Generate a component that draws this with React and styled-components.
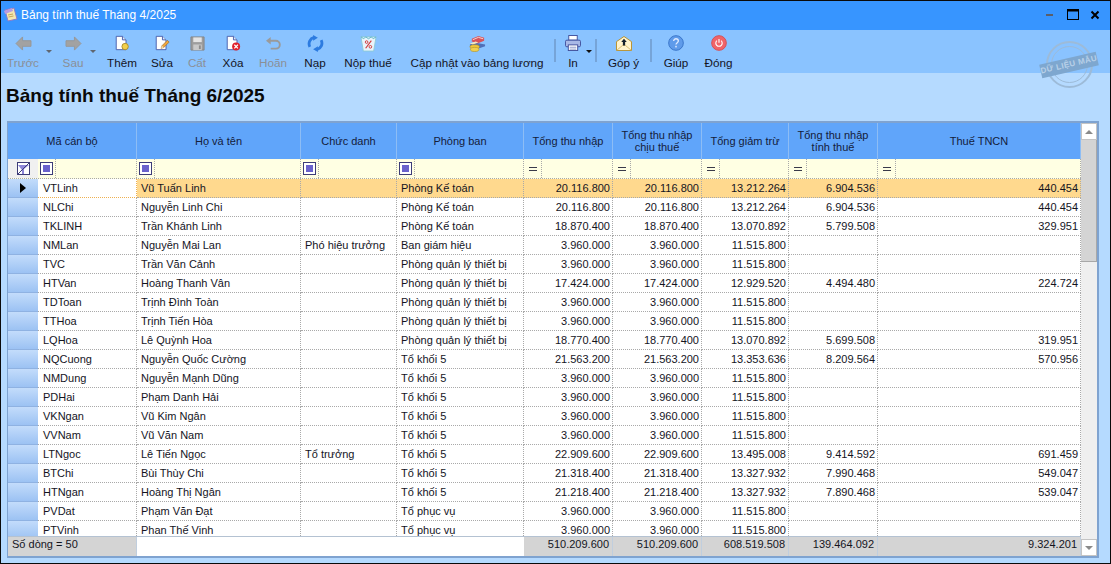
import styled, { createGlobalStyle } from 'styled-components'

const GlobalStyle = createGlobalStyle`
    html, body {
        margin: 0;
        padding: 0;
        background: #b5daff;
    }
    body {
        font-family: "Liberation Sans", Arial, sans-serif;
        font-size: 11px;
        color: #14141e;
    }
`

const GRID_COLUMNS = '30px 99px 164px 96px 127px 89px 89px 87px 89px 203px'

const Window = styled.div`
    position: relative;
    display: flex;
    flex-direction: column;
    box-sizing: border-box;
    width: 1111px;
    height: 564px;
    overflow: hidden;
    background: #b5daff;
    border: 1px solid #0a0a0a;
`

const TitleBar = styled.div`
    display: flex;
    align-items: center;
    box-sizing: border-box;
    height: 29px;
    padding: 0 0 2px 2px;
    background: #3795ff;
    color: #fff;
    font-size: 12px;
`

const TitleText = styled.span`
    margin-left: 2px;
`

const WindowButtons = styled.div`
    display: flex;
    align-items: center;
    margin-left: auto;
    padding-right: 4px;
`

const WindowButton = styled.span`
    display: flex;
    justify-content: center;
    width: 22px;
`

const Toolbar = styled.div`
    display: flex;
    align-items: flex-start;
    height: 43px;
    padding-left: 3px;
    background: #8ac3ff;
`

const ToolButton = styled.div`
    display: flex;
    flex-direction: column;
    align-items: center;
    flex: none;
    width: ${(p) => p.$w}px;
    color: ${(p) => (p.$off ? '#8b8f96' : '#14141e')};
    white-space: nowrap;
`

const ToolIcon = styled.div`
    display: flex;
    align-items: center;
    justify-content: center;
    height: 20px;
    margin-top: 3px;
`

const ToolLabel = styled.span`
    margin-top: 2px;
    font-size: 11.7px;
    line-height: 15px;
`

const Caret = styled.div`
    display: flex;
    flex: none;
    justify-content: center;
    width: ${(p) => p.$w}px;
    padding-top: 20px;
    &::after {
        content: '';
        flex: none;
        border: 3px solid transparent;
        border-top: 3px solid ${(p) => (p.$off ? '#5f6670' : '#111')};
        border-bottom: 0;
    }
`

const Separator = styled.div`
    flex: none;
    width: 2px;
    height: 23px;
    margin: 9px ${(p) => p.$right}px 0 ${(p) => p.$left}px;
    background: #76a4d8;
`

const Heading = styled.h1`
    margin: 0;
    padding: 11px 0 13px 5px;
    font-size: 19px;
    line-height: 24px;
    font-weight: bold;
    color: #0a0a0a;
`

const GridFrame = styled.div`
    display: flex;
    box-sizing: border-box;
    width: 1092px;
    height: 437px;
    margin-left: 6px;
    border: 2px solid #7fa3d0;
    border-left-width: 1px;
    background: #fff;
`

const GridMain = styled.div`
    display: flex;
    flex-direction: column;
    width: 1073px;
    background: #fff;
`

const HeaderRow = styled.div`
    display: grid;
    grid-template-columns: ${GRID_COLUMNS};
    height: 36px;
    background: #60a5fa;
`

const HeaderCell = styled.div`
    display: flex;
    align-items: center;
    justify-content: center;
    grid-column: span ${(p) => p.$span || 1};
    box-sizing: border-box;
    border-right: 1px solid #8dbdf5;
    text-align: center;
    line-height: 12px;
    color: #14203a;
`

const FilterRow = styled.div`
    display: grid;
    grid-template-columns: ${GRID_COLUMNS};
    height: 20px;
    background: #ffffe3;
    box-sizing: border-box;
    border-bottom: 1px dotted #a9a9a9;
`

const FilterCorner = styled.div`
    display: flex;
    align-items: center;
    justify-content: center;
    background: #f0f0f0;
`

const FilterCell = styled.div`
    box-sizing: border-box;
    border-right: 1px dotted #a9a9a9;
`

const FilterOperator = styled.div`
    display: flex;
    align-items: center;
    justify-content: center;
    box-sizing: border-box;
    width: 18px;
    height: 100%;
    border-right: 1px dotted #a9a9a9;
`

const CheckOperator = styled.span`
    display: flex;
    align-items: center;
    justify-content: center;
    box-sizing: border-box;
    width: 13px;
    height: 13px;
    background: #fff;
    border: 1px solid #3c3c78;
    &::after {
        content: '';
        width: 7px;
        height: 7px;
        background: #6a62cc;
    }
`

const EqualOperator = styled.span`
    width: 8px;
    height: 2px;
    border-top: 1px solid #3a3a4a;
    border-bottom: 1px solid #3a3a4a;
`

const RowsArea = styled.div`
    flex: 1;
    min-height: 0;
    overflow: hidden;
`

const Row = styled.div`
    display: grid;
    grid-template-columns: ${GRID_COLUMNS};
    height: 19px;
`

const RowHeader = styled.div`
    display: flex;
    align-items: center;
    justify-content: center;
    box-sizing: border-box;
    border-bottom: 1px solid #8fb2e2;
    background: linear-gradient(#c3dcfb, #9cc2f3);
    &::after {
        content: ${(p) => (p.$current ? "''" : 'none')};
        border: 5px solid transparent;
        border-left: 6px solid #000;
        border-right: 0;
    }
`

const Cell = styled.div`
    box-sizing: border-box;
    padding: 0 2px 0 ${(p) => (p.$num ? '1px' : '4px')};
    overflow: hidden;
    border-right: 1px dotted ${(p) => (p.$focus ? '#eeb050' : '#a9a9a9')};
    border-bottom: 1px dotted ${(p) => (p.$focus ? '#eeb050' : '#a9a9a9')};
    background: ${(p) => (p.$selected ? '#ffd98e' : '#fff')};
    text-align: ${(p) => (p.$num ? 'right' : 'left')};
    line-height: 18px;
    white-space: nowrap;
    &:nth-child(2) {
        padding-left: 5px;
    }
`

const FooterRow = styled.div`
    display: grid;
    grid-template-columns: 129px 387px 89px 89px 87px 89px 203px;
    flex: none;
    box-sizing: border-box;
    height: 20px;
    border-top: 1px solid #b4c2d2;
`

const FooterCell = styled.div`
    box-sizing: border-box;
    padding: 0 3px 0 4px;
    background: ${(p) => (p.$blank ? '#fff' : '#d4d4d4')};
    border-right: 1px solid ${(p) => (p.$blank ? '#fff' : '#c0cede')};
    text-align: ${(p) => (p.$num ? 'right' : 'left')};
    line-height: 15px;
`

const ScrollBar = styled.div`
    display: flex;
    flex-direction: column;
    flex: none;
    width: 16px;
    background: #efefef;
`

const ScrollButton = styled.div`
    display: flex;
    align-items: center;
    justify-content: center;
    flex: none;
    box-sizing: border-box;
    height: 17px;
    margin-top: ${(p) => (p.$end ? 'auto' : '0')};
    background: #fff;
    border: 1px solid #c4c4c4;
    &::after {
        content: '';
        border: 4px solid transparent;
        ${(p) => (p.$end ? 'border-top: 4px solid #8a8a8a; border-bottom: 0;' : 'border-bottom: 4px solid #8a8a8a; border-top: 0;')}
    }
`

const ScrollThumb = styled.div`
    flex: none;
    box-sizing: border-box;
    height: 122px;
    background: #d4d4d4;
    border-right: 1px solid #a8a8a8;
    border-bottom: 1px solid #a8a8a8;
`

const Stamp = styled.div`
    position: absolute;
    top: 40px;
    left: 1045px;
    width: 47px;
    height: 47px;
    box-sizing: border-box;
    border: 2px solid #9dbbd8;
    border-radius: 50%;
`

const StampInner = styled.div`
    position: absolute;
    inset: 3px;
    border: 1px solid #9dbbd8;
    border-radius: 50%;
`

const StampBand = styled.div`
    position: absolute;
    top: 15px;
    left: -8px;
    width: 58px;
    height: 14px;
    background: #7ea7cf;
    color: #b8d0e8;
    font-size: 8px;
    font-weight: bold;
    line-height: 14px;
    letter-spacing: 0.4px;
    text-align: center;
    white-space: nowrap;
    transform: rotate(-13deg);
`

const IconAppNote = () => (
    <svg width="16" height="17" viewBox="0 0 16 17">
        <path d="M2 4l9-2 3 11-9 2z" fill="#f4e6b0" stroke="#8a7ac8" />
        <path d="M1 5l8-3 1 3-8 3z" fill="#b79be0" />
        <path d="M5 9l5-1M5.5 11l5-1" stroke="#c6a75a" />
    </svg>
)

const IconArrow = ({ flip }) => (
    <svg width="17" height="15" viewBox="0 0 18 16" style={flip ? { transform: 'scaleX(-1)' } : undefined}>
        <path d="M8 1L1 8l7 7v-4h9V5H8z" fill="#a2a2a2" stroke="#969696" />
    </svg>
)

const Page = ({ children }) => (
    <svg width="16" height="16" viewBox="0 0 18 18">
        <path d="M2.500 1.500h7l4 4v11h-11z" fill="#fff" stroke="#3f57a8" />
        <path d="M9.500 1.500v4h4" fill="#dfe6f5" stroke="#3f57a8" />
        {children}
    </svg>
)

const IconAdd = () => (
    <Page>
        <circle cx="12.500" cy="13" r="3.600" fill="#f2cf4a" stroke="#a78a2a" />
    </Page>
)

const IconEdit = () => (
    <Page>
        <path d="M8 15l1-3 6-6 2 2-6 6z" fill="#f0a53c" stroke="#9a6a2a" strokeWidth="0.7" />
        <path d="M8 15l1-3 2 2z" fill="#f6e2b8" />
    </Page>
)

const IconSave = () => (
    <svg width="15" height="15" viewBox="0 0 16 16">
        <path d="M1 1h14v14H1z" fill="#9d9d9d" stroke="#858585" />
        <rect x="3.500" y="1.500" width="9" height="5" fill="#e4e4e4" />
        <rect x="3.500" y="9" width="9" height="6" fill="#c9c9c9" />
        <rect x="9.500" y="10" width="2" height="4" fill="#8c8c8c" />
    </svg>
)

const IconDelete = () => (
    <Page>
        <circle cx="12.500" cy="13" r="4.500" fill="#e0202c" />
        <path d="M10.500 11l4 4m0-4l-4 4" stroke="#fff" strokeWidth="1.400" />
    </Page>
)

const IconUndo = () => (
    <svg width="17" height="15" viewBox="0 0 18 16">
        <path d="M6 1L1 5l5 4z" fill="#9a9a9a" />
        <path d="M5 5h6.500a4 4 0 010 8.500H6" fill="none" stroke="#9a9a9a" strokeWidth="2" />
    </svg>
)

const IconReload = () => (
    <svg width="17" height="17" viewBox="0 0 18 18">
        <path d="M3 12.500A7 7 0 0 1 7.500 2.500" fill="none" stroke="#2c7be0" strokeWidth="3" />
        <path d="M15 5.500A7 7 0 0 1 10.500 15.500" fill="none" stroke="#2c7be0" strokeWidth="3" />
        <path d="M6.500 0l5 3-5 3z" fill="#2c7be0" />
        <path d="M11.500 18l-5-3 5-3z" fill="#2c7be0" />
    </svg>
)

const IconTax = () => (
    <svg width="17" height="17" viewBox="0 0 18 18">
        <path d="M1 2l16 0-2.500 15h-11z" fill="#eaf4fb" stroke="#8ccbd8" />
        <path d="M1 2l3 2 2-2 3 2 3-2 2 2 3-2" fill="none" stroke="#5fb7c8" />
        <path d="M12 6l-6 8" stroke="#d03838" strokeWidth="1.200" />
        <circle cx="7" cy="7.500" r="1.400" fill="none" stroke="#d03838" />
        <circle cx="11" cy="12.500" r="1.400" fill="none" stroke="#d03838" />
    </svg>
)

const IconBooks = () => (
    <svg width="17" height="17" viewBox="0 0 18 18">
        <path d="M1 10l5-2 11 2v2l-6 2-10-2z" fill="#4f6fb8" />
        <path d="M3 4l7-3 6 2v3l-7 3-6-2z" fill="#d8525a" />
        <path d="M4 5l6-2.500 5 1.500" fill="none" stroke="#f6d8d0" />
        <path d="M1 9l6-2 3 1-6 2z" fill="#f3e6c0" />
        <ellipse cx="6" cy="12.500" rx="5" ry="2.200" fill="#f0c83c" stroke="#b08c20" strokeWidth="0.6" />
        <ellipse cx="6" cy="15.300" rx="4.500" ry="2.200" fill="#f0d050" stroke="#b08c20" strokeWidth="0.6" />
    </svg>
)

const IconPrinter = () => (
    <svg width="16" height="16" viewBox="0 0 17 17">
        <rect x="4" y="0.500" width="9" height="5" fill="#fff" stroke="#3f4f9c" />
        <rect x="0.500" y="5.500" width="16" height="7" rx="1.500" fill="#a8b8e6" stroke="#3f4f9c" />
        <rect x="3.500" y="10.500" width="10" height="6" fill="#fff" stroke="#3f4f9c" />
        <path d="M5 13h7M5 15h7" stroke="#8a98c8" />
    </svg>
)

const IconMail = () => (
    <svg width="16" height="15" viewBox="0 0 17 16">
        <path d="M.5 6L8.500.500 16.500 6v9.500H.5z" fill="#fff3cc" stroke="#b8902c" />
        <path d="M1 15l6-5h3l6 5" fill="none" stroke="#d8bc70" />
        <path d="M8.500 3l3 3.500H9.700V10H7.300V6.500H5.500z" fill="#14202c" />
    </svg>
)

const IconHelp = () => (
    <svg width="16" height="16" viewBox="0 0 17 17">
        <circle cx="8.500" cy="8.500" r="7.800" fill="#5f9bea" stroke="#3873c8" />
        <path d="M6 6.500a2.500 2.500 0 115 0c0 1.700-2.500 1.800-2.500 3.700" fill="none" stroke="#dfeaff" strokeWidth="1.400" />
        <rect x="7.700" y="11.500" width="1.600" height="1.700" fill="#dfeaff" />
    </svg>
)

const IconClose = () => (
    <svg width="16" height="16" viewBox="0 0 17 17">
        <circle cx="8.500" cy="8.500" r="7.800" fill="#f06468" stroke="#d84c50" />
        <path d="M6.300 6a3.400 3.400 0 104.400 0" fill="none" stroke="#fff" strokeWidth="1.200" />
        <path d="M8.500 4.200v4" stroke="#fff" strokeWidth="1.200" />
    </svg>
)

const IconFilterCorner = () => (
    <svg width="13" height="13" viewBox="0 0 13 13">
        <rect x="0.500" y="0.500" width="12" height="12" fill="#fff" stroke="#3c3c78" />
        <path d="M1 3h11L7 7v5H5V8z" fill="#8d86d8" />
        <path d="M1 12L12 1" stroke="#3c3c78" />
    </svg>
)

const columns = ['Mã cán bộ', 'Họ và tên', 'Chức danh', 'Phòng ban', 'Tổng thu nhập', 'Tổng thu nhập chịu thuế', 'Tổng giảm trừ', 'Tổng thu nhập tính thuế', 'Thuế TNCN']

const rows = [
    ['VTLinh', 'Vũ Tuấn Linh', '', 'Phòng Kế toán', '20.116.800', '20.116.800', '13.212.264', '6.904.536', '440.454'],
    ['NLChi', 'Nguyễn Linh Chi', '', 'Phòng Kế toán', '20.116.800', '20.116.800', '13.212.264', '6.904.536', '440.454'],
    ['TKLINH', 'Trần Khánh Linh', '', 'Phòng Kế toán', '18.870.400', '18.870.400', '13.070.892', '5.799.508', '329.951'],
    ['NMLan', 'Nguyễn Mai Lan', 'Phó hiệu trưởng', 'Ban giám hiệu', '3.960.000', '3.960.000', '11.515.800', '', ''],
    ['TVC', 'Trần Văn Cảnh', '', 'Phòng quản lý thiết bị', '3.960.000', '3.960.000', '11.515.800', '', ''],
    ['HTVan', 'Hoàng Thanh Vân', '', 'Phòng quản lý thiết bị', '17.424.000', '17.424.000', '12.929.520', '4.494.480', '224.724'],
    ['TDToan', 'Trịnh Đình Toàn', '', 'Phòng quản lý thiết bị', '3.960.000', '3.960.000', '11.515.800', '', ''],
    ['TTHoa', 'Trịnh Tiến Hòa', '', 'Phòng quản lý thiết bị', '3.960.000', '3.960.000', '11.515.800', '', ''],
    ['LQHoa', 'Lê Quỳnh Hoa', '', 'Phòng quản lý thiết bị', '18.770.400', '18.770.400', '13.070.892', '5.699.508', '319.951'],
    ['NQCuong', 'Nguyễn Quốc Cường', '', 'Tổ khối 5', '21.563.200', '21.563.200', '13.353.636', '8.209.564', '570.956'],
    ['NMDung', 'Nguyễn Mạnh Dũng', '', 'Tổ khối 5', '3.960.000', '3.960.000', '11.515.800', '', ''],
    ['PDHai', 'Phạm Danh Hải', '', 'Tổ khối 5', '3.960.000', '3.960.000', '11.515.800', '', ''],
    ['VKNgan', 'Vũ Kim Ngân', '', 'Tổ khối 5', '3.960.000', '3.960.000', '11.515.800', '', ''],
    ['VVNam', 'Vũ Văn Nam', '', 'Tổ khối 5', '3.960.000', '3.960.000', '11.515.800', '', ''],
    ['LTNgoc', 'Lê Tiến Ngọc', 'Tổ trưởng', 'Tổ khối 5', '22.909.600', '22.909.600', '13.495.008', '9.414.592', '691.459'],
    ['BTChi', 'Bùi Thùy Chi', '', 'Tổ khối 5', '21.318.400', '21.318.400', '13.327.932', '7.990.468', '549.047'],
    ['HTNgan', 'Hoàng Thị Ngân', '', 'Tổ khối 5', '21.218.400', '21.218.400', '13.327.932', '7.890.468', '539.047'],
    ['PVDat', 'Phạm Văn Đạt', '', 'Tổ phục vụ', '3.960.000', '3.960.000', '11.515.800', '', ''],
    ['PTVinh', 'Phan Thế Vinh', '', 'Tổ phục vụ', '3.960.000', '3.960.000', '11.515.800', '', ''],
]

function App() {
    return (
        <Window>
            <GlobalStyle />
            <TitleBar>
                <IconAppNote />
                <TitleText>Bảng tính thuế Tháng 4/2025</TitleText>
                <WindowButtons>
                    <WindowButton>
                        <svg width="10" height="10" viewBox="0 0 10 10">
                            <rect x="0" y="4" width="7" height="2" fill="#5a5f6a" />
                        </svg>
                    </WindowButton>
                    <WindowButton>
                        <svg width="12" height="11" viewBox="0 0 12 11">
                            <rect x="0.500" y="0.500" width="11" height="10" fill="none" stroke="#000" />
                            <rect x="0" y="0" width="12" height="2.500" fill="#000" />
                        </svg>
                    </WindowButton>
                    <WindowButton>
                        <svg width="10" height="10" viewBox="0 0 10 10">
                            <path d="M1.500 1.500l7 7m0-7l-7 7" stroke="#000" strokeWidth="2" />
                        </svg>
                    </WindowButton>
                </WindowButtons>
            </TitleBar>
            <Toolbar>
                <ToolButton $w={38} $off><ToolIcon><IconArrow /></ToolIcon><ToolLabel>Trước</ToolLabel></ToolButton>
                <Caret $w={13} $off />
                <ToolButton $w={36} $off><ToolIcon><IconArrow flip /></ToolIcon><ToolLabel>Sau</ToolLabel></ToolButton>
                <Caret $w={4} $off />
                <ToolButton $w={54}><ToolIcon><IconAdd /></ToolIcon><ToolLabel>Thêm</ToolLabel></ToolButton>
                <ToolButton $w={26}><ToolIcon><IconEdit /></ToolIcon><ToolLabel>Sửa</ToolLabel></ToolButton>
                <ToolButton $w={44} $off><ToolIcon><IconSave /></ToolIcon><ToolLabel>Cất</ToolLabel></ToolButton>
                <ToolButton $w={28}><ToolIcon><IconDelete /></ToolIcon><ToolLabel>Xóa</ToolLabel></ToolButton>
                <ToolButton $w={52} $off><ToolIcon><IconUndo /></ToolIcon><ToolLabel>Hoãn</ToolLabel></ToolButton>
                <ToolButton $w={32}><ToolIcon><IconReload /></ToolIcon><ToolLabel>Nạp</ToolLabel></ToolButton>
                <ToolButton $w={74}><ToolIcon><IconTax /></ToolIcon><ToolLabel>Nộp thuế</ToolLabel></ToolButton>
                <ToolButton $w={144}><ToolIcon><IconBooks /></ToolIcon><ToolLabel>Cập nhật vào bảng lương</ToolLabel></ToolButton>
                <Separator $left={5} $right={2} />
                <ToolButton $w={30}><ToolIcon><IconPrinter /></ToolIcon><ToolLabel>In</ToolLabel></ToolButton>
                <Caret $w={2} />
                <Separator $left={5} $right={0} />
                <ToolButton $w={53}><ToolIcon><IconMail /></ToolIcon><ToolLabel>Góp ý</ToolLabel></ToolButton>
                <Separator $left={0} $right={0} />
                <ToolButton $w={48}><ToolIcon><IconHelp /></ToolIcon><ToolLabel>Giúp</ToolLabel></ToolButton>
                <ToolButton $w={37}><ToolIcon><IconClose /></ToolIcon><ToolLabel>Đóng</ToolLabel></ToolButton>
            </Toolbar>
            <Heading>Bảng tính thuế Tháng 6/2025</Heading>
            <GridFrame>
                <GridMain>
                    <HeaderRow>
                        {columns.map((name, i) => (
                            <HeaderCell key={name} $span={i === 0 ? 2 : 1}>{name}</HeaderCell>
                        ))}
                    </HeaderRow>
                    <FilterRow>
                        <FilterCorner><IconFilterCorner /></FilterCorner>
                        {columns.map((name, i) => (
                            <FilterCell key={name}>
                                <FilterOperator>
                                    {i < 4 ? <CheckOperator /> : <EqualOperator />}
                                </FilterOperator>
                            </FilterCell>
                        ))}
                    </FilterRow>
                    <RowsArea>
                        {rows.map((row, r) => (
                            <Row key={row[0]}>
                                <RowHeader $current={r === 0} />
                                {row.map((value, c) => (
                                    <Cell
                                        key={c}
                                        $num={c > 3}
                                        $selected={r === 0 && c > 0}
                                        $focus={r === 0 && c === 0}
                                    >
                                        {value}
                                    </Cell>
                                ))}
                            </Row>
                        ))}
                    </RowsArea>
                    <FooterRow>
                        <FooterCell>Số dòng = 50</FooterCell>
                        <FooterCell $blank />
                        <FooterCell $num>510.209.600</FooterCell>
                        <FooterCell $num>510.209.600</FooterCell>
                        <FooterCell $num>608.519.508</FooterCell>
                        <FooterCell $num>139.464.092</FooterCell>
                        <FooterCell $num>9.324.201</FooterCell>
                    </FooterRow>
                </GridMain>
                <ScrollBar>
                    <ScrollButton />
                    <ScrollThumb />
                    <ScrollButton $end />
                </ScrollBar>
            </GridFrame>
            <Stamp>
                <StampInner />
                <StampBand>DỮ LIỆU MẪU</StampBand>
            </Stamp>
        </Window>
    )
}

export default App
